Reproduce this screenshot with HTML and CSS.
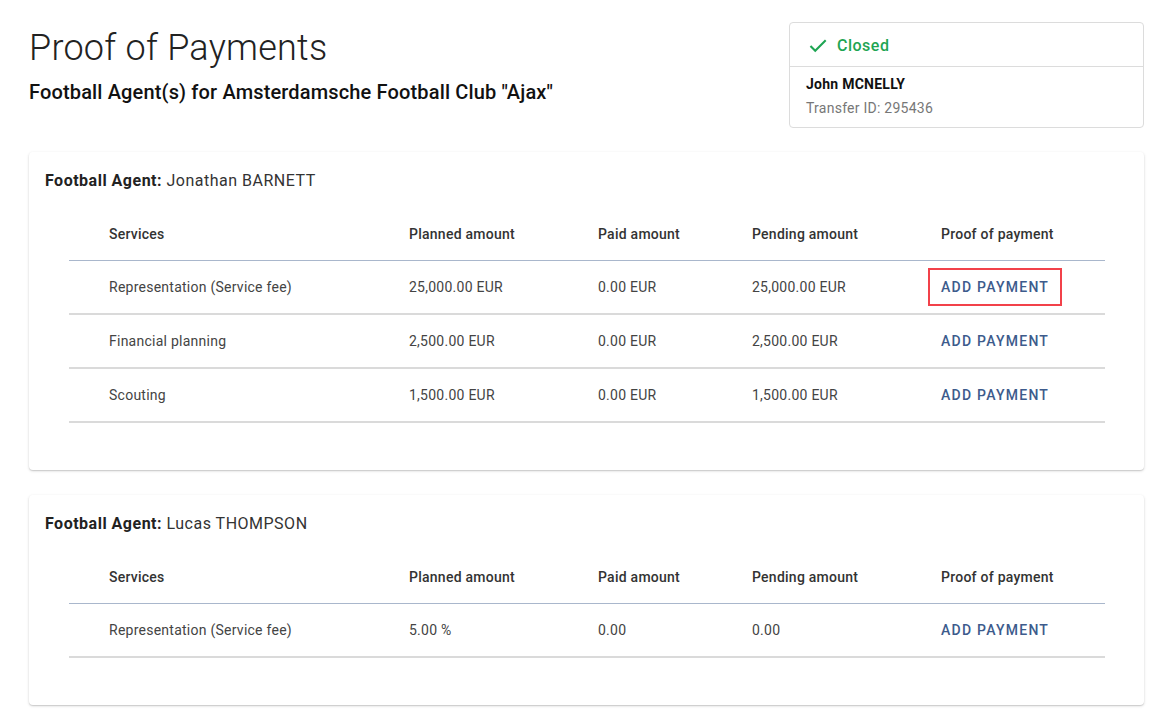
FILE: index.html
```html
<!DOCTYPE html>
<html lang="en">
<head>
  <meta charset="UTF-8">
  <meta name="viewport" content="width=device-width, initial-scale=1.0">
  <title>Proof of Payments</title>
  <link rel="stylesheet" href="styles.css">
</head>
<body>
  <div class="page">
    <div class="page-header">
      <div class="titles">
        <h1>Proof of Payments</h1>
        <h2>Football Agent(s) for Amsterdamsche Football Club "Ajax"</h2>
      </div>

      <div class="status-card">
        <div class="status-head">
          <svg class="check" width="22" height="22" viewBox="0 0 24 24">
            <path d="M9 16.6L4.6 12.2l-1.6 1.6L9 19.8 21.2 7.6 19.6 6 9 16.6z" fill="#1ea553"/>
          </svg>
          <span>Closed</span>
        </div>
        <div class="status-body">
          <div class="player">John MCNELLY</div>
          <div class="transfer">Transfer ID: 295436</div>
        </div>
      </div>
    </div>

    <div class="agent-card">
      <div class="agent-name"><b>Football Agent:</b> Jonathan BARNETT</div>
      <table class="services">
        <colgroup>
          <col class="c-service">
          <col class="c-planned">
          <col class="c-paid">
          <col class="c-pending">
          <col>
        </colgroup>
        <thead>
          <tr>
            <th>Services</th>
            <th>Planned amount</th>
            <th>Paid amount</th>
            <th>Pending amount</th>
            <th>Proof of payment</th>
          </tr>
        </thead>
        <tbody>
          <tr>
            <td>Representation (Service fee)</td>
            <td>25,000.00 EUR</td>
            <td>0.00 EUR</td>
            <td>25,000.00 EUR</td>
            <td><button class="add-btn is-highlighted">Add payment</button></td>
          </tr>
          <tr>
            <td>Financial planning</td>
            <td>2,500.00 EUR</td>
            <td>0.00 EUR</td>
            <td>2,500.00 EUR</td>
            <td><button class="add-btn">Add payment</button></td>
          </tr>
          <tr>
            <td>Scouting</td>
            <td>1,500.00 EUR</td>
            <td>0.00 EUR</td>
            <td>1,500.00 EUR</td>
            <td><button class="add-btn">Add payment</button></td>
          </tr>
        </tbody>
      </table>
    </div>

    <div class="agent-card">
      <div class="agent-name"><b>Football Agent:</b> Lucas THOMPSON</div>
      <table class="services">
        <colgroup>
          <col class="c-service">
          <col class="c-planned">
          <col class="c-paid">
          <col class="c-pending">
          <col>
        </colgroup>
        <thead>
          <tr>
            <th>Services</th>
            <th>Planned amount</th>
            <th>Paid amount</th>
            <th>Pending amount</th>
            <th>Proof of payment</th>
          </tr>
        </thead>
        <tbody>
          <tr>
            <td>Representation (Service fee)</td>
            <td>5.00 %</td>
            <td>0.00</td>
            <td>0.00</td>
            <td><button class="add-btn">Add payment</button></td>
          </tr>
        </tbody>
      </table>
    </div>
  </div>
</body>
</html>
```

FILE: styles.css
```css
body {
  margin: 0;
  font-family: Roboto, "Liberation Sans", sans-serif;
  color: #222;
  background: #fff;
}
.page {
  padding: 22px 8px 0 29px;
}
.page-header {
  display: flex;
  justify-content: space-between;
  align-items: flex-start;
  margin-bottom: 24px;
}
h1 {
  margin: 4px 0 0;
  font-size: 36px;
  font-weight: 300;
  letter-spacing: 0.25px;
  line-height: 44px;
  color: #222;
}
h2 {
  margin: 9px 0 0;
  font-size: 20px;
  font-weight: 500;
  letter-spacing: 0.15px;
  line-height: 26px;
  color: #111;
}
.status-card {
  width: 353px;
  border: 1px solid #dcdcdc;
  border-radius: 4px;
}
.status-head {
  display: flex;
  align-items: center;
  height: 44px;
  padding: 1px 16px 0 17px;
  box-sizing: border-box;
  border-bottom: 1px solid #dcdcdc;
  color: #1ea553;
  font-size: 16px;
  font-weight: 500;
  letter-spacing: 0.5px;
}
.status-head .check {
  margin-right: 8px;
}
.status-body {
  padding: 5px 16px 7px;
  font-size: 14px;
  letter-spacing: 0.25px;
  line-height: 24px;
}
.player {
  font-weight: 700;
  color: #111;
}
.transfer {
  color: #777;
}
.agent-card {
  background: #fff;
  border-radius: 4px;
  box-shadow: 0 1px 3px rgba(0, 0, 0, 0.16), 0 1px 1px rgba(0, 0, 0, 0.1);
  padding: 17px 39px 47px 16px;
  margin-bottom: 25px;
}
.agent-name {
  font-size: 16px;
  letter-spacing: 0.5px;
  line-height: 24px;
  color: #333;
  margin-bottom: 14px;
}
.agent-name b {
  font-weight: 700;
  color: #222;
}
.services {
  margin-left: 24px;
  width: calc(100% - 24px);
  border-collapse: collapse;
  font-size: 14px;
  letter-spacing: 0.25px;
}
.c-service { width: 300px; }
.c-planned { width: 189px; }
.c-paid { width: 154px; }
.c-pending { width: 189px; }
.services th {
  text-align: left;
  font-weight: 500;
  color: #333;
  height: 53px;
  padding: 0 0 0 40px;
  border-bottom: 1px solid #a9b7cc;
}
.services td {
  height: 52px;
  padding: 0 0 0 40px;
  color: #444;
  border-bottom: 2px solid #dadada;
}
.add-btn {
  font-family: inherit;
  font-size: 14px;
  font-weight: 500;
  text-transform: uppercase;
  letter-spacing: 1.25px;
  color: #3d5b8c;
  background: none;
  border: 2px solid transparent;
  padding: 9px 11px;
  margin-left: -13px;
  cursor: pointer;
}
.add-btn.is-highlighted {
  border-color: #f2414a;
}
```
